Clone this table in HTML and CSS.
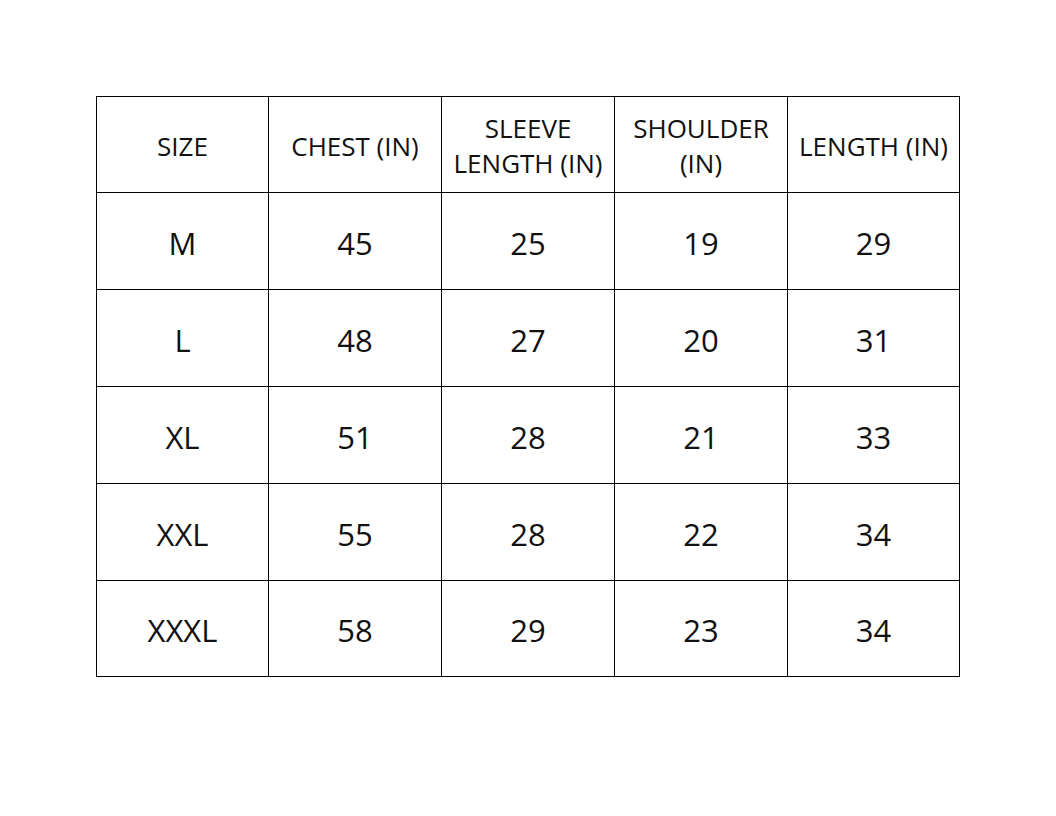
FILE: index.html
```html
<!DOCTYPE html>
<html>
<head>
<meta charset="utf-8">
<link rel="stylesheet" href="styles.css">
</head>
<body>
<div class="page">
<table class="sizes">
<colgroup><col class="cs"><col class="cn"><col class="cn"><col class="cn"><col class="cs"></colgroup>
<thead>
<tr><th>SIZE</th><th>CHEST (IN)</th><th>SLEEVE<br>LENGTH (IN)</th><th>SHOULDER<br>(IN)</th><th>LENGTH (IN)</th></tr>
</thead>
<tbody>
<tr><td>M</td><td>45</td><td>25</td><td>19</td><td>29</td></tr>
<tr><td>L</td><td>48</td><td>27</td><td>20</td><td>31</td></tr>
<tr><td>XL</td><td>51</td><td>28</td><td>21</td><td>33</td></tr>
<tr><td>XXL</td><td>55</td><td>28</td><td>22</td><td>34</td></tr>
<tr class="last"><td>XXXL</td><td>58</td><td>29</td><td>23</td><td>34</td></tr>
</tbody>
</table>
</div>
</body>
</html>
```
FILE: styles.css
```css
html, body {
  margin: 0;
  background: #fff;
}
.page {
  padding: 96px 0 0 96px;
  font-family: "Open Sans", "Noto Sans", sans-serif;
  color: #111;
}
.sizes {
  border-collapse: collapse;
  table-layout: fixed;
  width: 863px;
}
.sizes .cs { width: 172px; }
.sizes .cn { width: 173px; }
.sizes th, .sizes td {
  border: 1px solid #000;
  text-align: center;
  vertical-align: middle;
  padding: 3px 0 0 0;
  white-space: nowrap;
}
.sizes th {
  font-weight: 400;
  font-size: 26px;
  line-height: 35px;
  height: 92px;
}
.sizes td {
  font-size: 31px;
  line-height: 40px;
  height: 93px;
}
.sizes .last td {
  height: 92px;
}
```
